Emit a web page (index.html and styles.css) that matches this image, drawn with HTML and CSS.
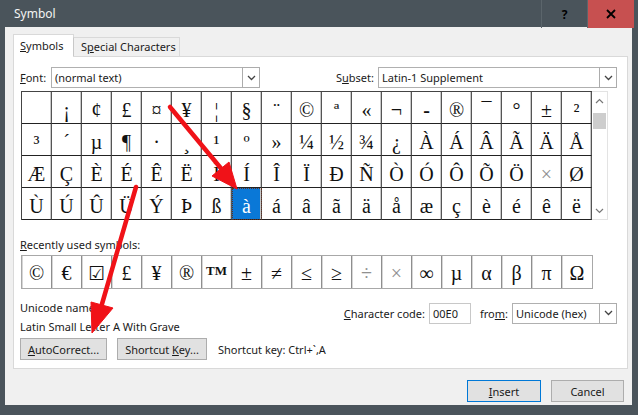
FILE: index.html
```html
<!DOCTYPE html>
<html>
<head>
<meta charset="utf-8">
<link rel="stylesheet" href="styles.css">
</head>
<body>
<div class="window">
  <div class="titlebar">
    <span class="title">Symbol</span>
    <div class="tb-btns">
      <div class="tb-help">?</div>
      <div class="tb-close"><svg width="10" height="10" viewBox="0 0 10 10"><path d="M1 1 L9 9 M9 1 L1 9" stroke="#000" stroke-width="1.8"/></svg></div>
    </div>
  </div>
  <div class="body">
    <div class="tabs">
      <div class="tab active"><span><u>S</u>ymbols</span></div>
      <div class="tab"><span>S<u>p</u>ecial Characters</span></div>
    </div>
    <div class="panel">
      <div class="row-font">
        <div class="field">
          <span class="lbl font-lbl"><u>F</u>ont:</span>
          <div class="combo font-combo"><span class="combo-text">(normal text)</span><span class="drop"><svg width="9" height="6" viewBox="0 0 9 6"><path d="M1 1 L4.5 4.5 L8 1" fill="none" stroke="#444" stroke-width="1.3"/></svg></span></div>
        </div>
        <div class="field subset-field">
          <span class="lbl">S<u>u</u>bset:</span>
          <div class="combo subset-combo"><span class="combo-text">Latin-1 Supplement</span><span class="drop"><svg width="9" height="6" viewBox="0 0 9 6"><path d="M1 1 L4.5 4.5 L8 1" fill="none" stroke="#444" stroke-width="1.3"/></svg></span></div>
        </div>
      </div>
      <div class="grid-wrap">
        <div class="symgrid">
          <div class="c"></div><div class="c">¡</div><div class="c">¢</div><div class="c">£</div><div class="c">¤</div><div class="c">¥</div><div class="c">¦</div><div class="c">§</div><div class="c">¨</div><div class="c">©</div><div class="c">ª</div><div class="c">«</div><div class="c">¬</div><div class="c hy">-</div><div class="c">®</div><div class="c">¯</div><div class="c">°</div><div class="c">±</div><div class="c">²</div>
          <div class="c">³</div><div class="c">´</div><div class="c">µ</div><div class="c">¶</div><div class="c">·</div><div class="c">¸</div><div class="c">¹</div><div class="c">º</div><div class="c">»</div><div class="c">¼</div><div class="c">½</div><div class="c">¾</div><div class="c">¿</div><div class="c">À</div><div class="c">Á</div><div class="c">Â</div><div class="c">Ã</div><div class="c">Ä</div><div class="c">Å</div>
          <div class="c">Æ</div><div class="c">Ç</div><div class="c">È</div><div class="c">É</div><div class="c">Ê</div><div class="c">Ë</div><div class="c">Ì</div><div class="c">Í</div><div class="c">Î</div><div class="c">Ï</div><div class="c">Ð</div><div class="c">Ñ</div><div class="c">Ò</div><div class="c">Ó</div><div class="c">Ô</div><div class="c">Õ</div><div class="c">Ö</div><div class="c gray">×</div><div class="c">Ø</div>
          <div class="c">Ù</div><div class="c">Ú</div><div class="c">Û</div><div class="c">Ü</div><div class="c">Ý</div><div class="c">Þ</div><div class="c">ß</div><div class="c sel">à</div><div class="c">á</div><div class="c">â</div><div class="c">ã</div><div class="c">ä</div><div class="c">å</div><div class="c">æ</div><div class="c">ç</div><div class="c">è</div><div class="c">é</div><div class="c">ê</div><div class="c">ë</div>
        </div>
        <div class="vscroll">
          <div class="sb-arrow"><svg width="9" height="6" viewBox="0 0 9 6"><path d="M1 5 L4.5 1.5 L8 5" fill="none" stroke="#777" stroke-width="1.2"/></svg></div>
          <div class="sb-thumb"></div>
          <div class="sb-track"></div>
          <div class="sb-arrow"><svg width="9" height="6" viewBox="0 0 9 6"><path d="M1 1 L4.5 4.5 L8 1" fill="none" stroke="#777" stroke-width="1.2"/></svg></div>
        </div>
      </div>
      <div class="recent-label"><u>R</u>ecently used symbols:</div>
      <div class="recent">
        <div class="r">©</div><div class="r">€</div><div class="r box">☑</div><div class="r">£</div><div class="r">¥</div><div class="r">®</div><div class="r tm">TM</div><div class="r">±</div><div class="r">≠</div><div class="r">≤</div><div class="r">≥</div><div class="r gray">÷</div><div class="r gray">×</div><div class="r">∞</div><div class="r">µ</div><div class="r">α</div><div class="r">β</div><div class="r">π</div><div class="r">Ω</div>
      </div>
      <div class="info">
        <div class="info-left">
          <div class="line">Unicode name:</div>
          <div class="line">Latin Small Letter A With Grave</div>
        </div>
        <div class="info-right">
          <span class="lbl"><u>C</u>haracter code:</span>
          <div class="textbox">00E0</div>
          <span class="lbl from-lbl">fro<u>m</u>:</span>
          <div class="combo from-combo"><span class="combo-text">Unicode (hex)</span><span class="drop"><svg width="9" height="6" viewBox="0 0 9 6"><path d="M1 1 L4.5 4.5 L8 1" fill="none" stroke="#444" stroke-width="1.3"/></svg></span></div>
        </div>
      </div>
      <div class="btn-row">
        <div class="btn auto"><span><u>A</u>utoCorrect...</span></div>
        <div class="btn key"><span>Shortcut <u>K</u>ey...</span></div>
        <span class="shortcut">Shortcut key: Ctrl+`,A</span>
      </div>
    </div>
    <div class="footer">
      <div class="btn insert"><span><u>I</u>nsert</span></div>
      <div class="btn cancel"><span>Cancel</span></div>
    </div>
  </div>
  <svg class="arrows" width="638" height="415" viewBox="0 0 638 415">
    <g fill="#f01218" stroke="#f01218">
      <line x1="170" y1="107" x2="224" y2="172" stroke-width="4.5" stroke-linecap="round"/>
      <polygon points="229,162 212,176 237,189" stroke-width="1"/>
      <line x1="136" y1="187" x2="102" y2="304" stroke-width="4.5" stroke-linecap="round"/>
      <polygon points="113,308 91,302 92,333" stroke-width="1"/>
    </g>
  </svg>
</div>
</body>
</html>
```

FILE: styles.css
```css
* { box-sizing: border-box; }
html, body { margin: 0; padding: 0; }
body {
  font-family: "Noto Sans", "Open Sans", sans-serif;
  font-size: 11px;
  color: #1a1a1a;
  background: #4a545b;
}
.window {
  position: relative;
  width: 638px;
  height: 415px;
  background: #4a545b;
  overflow: hidden;
}
.titlebar {
  height: 27px;
  display: flex;
  align-items: stretch;
  justify-content: space-between;
}
.title {
  color: #f4f4f4;
  padding-left: 14px;
  line-height: 27px;
  font-size: 12px;
}
.tb-btns {
  display: flex;
  margin-right: 4px;
}
.tb-help {
  width: 47px;
  height: 28px;
  display: flex;
  align-items: center;
  justify-content: center;
  font-weight: bold;
  font-size: 12px;
  color: #000;
  border-left: 1px solid #5b656b;
  border-right: 1px solid #5b656b;
}
.tb-close {
  width: 46px;
  height: 28px;
  background: #c75050;
  display: flex;
  align-items: center;
  justify-content: center;
}
.body {
  margin-left: 5px;
  width: 627px;
  height: 378px;
  background: #f0f0f0;
  padding: 7px 0 0 8px;
}
.tabs {
  display: flex;
  align-items: flex-end;
  height: 22px;
  position: relative;
  z-index: 2;
}
.tab {
  height: 19px;
  border: 1px solid #d9d9d9;
  border-bottom: none;
  background: #f0f0f0;
  line-height: 18px;
  white-space: nowrap;
  padding-left: 6px;
}
.tab.active {
  height: 23px;
  width: 61px;
  background: #ffffff;
  line-height: 22px;
  margin-bottom: -1px;
}
.tab:not(.active) {
  width: 107px;
  margin-left: -1px;
  padding-left: 7px;
  border-left-color: #c8c8c8;
}
.panel {
  width: 615px;
  height: 313px;
  background: #ffffff;
  border: 1px solid #d9d9d9;
  padding: 10px 10px 0 6px;
  position: relative;
  z-index: 1;
}
.row-font {
  display: flex;
  justify-content: space-between;
  height: 21px;
}
.field {
  display: flex;
  align-items: center;
}
.lbl { white-space: nowrap; }
.font-lbl { width: 31px; }
.subset-field .lbl { margin-right: 4px; }
.combo {
  height: 21px;
  border: 1px solid #b0b0b0;
  background: #fff;
  display: flex;
  align-items: center;
  justify-content: space-between;
  position: relative;
  white-space: nowrap;
}
.combo-text { padding-left: 3px; }
.drop {
  width: 18px;
  height: 21px;
  margin-right: -1px;
  border: 1px solid #acacac;
  display: flex;
  align-items: center;
  justify-content: center;
  background: #fff;
}
.font-combo { width: 209px; }
.subset-combo { width: 239px; }
.grid-wrap {
  display: flex;
  margin-top: 3px;
  margin-left: 1px;
}
.symgrid {
  display: grid;
  grid-template-columns: repeat(19, 30px);
  grid-template-rows: repeat(4, 32px);
  border-top: 1px solid #444;
  border-left: 1px solid #444;
  width: 571px;
}
.c {
  border-right: 1px solid #555;
  border-bottom: 1px solid #222;
  box-shadow: inset -1px 0 0 #c8c8c8;
  font-family: "Liberation Serif", "DejaVu Serif", serif;
  font-size: 20px;
  color: #111;
  display: flex;
  align-items: center;
  justify-content: center;
  padding-top: 5px;
}
.c.hy { font-weight: bold; }
.c.gray, .r.gray { color: #909090; }
.c.sel {
  background: #0a78d7;
  color: #fff;
  outline: 1px dotted #603020;
  outline-offset: -1px;
}
.vscroll {
  width: 16px;
  height: 129px;
  border: 1px solid #e3e3e3;
  border-left: none;
  background: #fff;
  display: flex;
  flex-direction: column;
}
.sb-arrow {
  height: 17px;
  display: flex;
  align-items: center;
  justify-content: center;
}
.sb-thumb {
  height: 16px;
  margin: 4px 1px 0 1px;
  background: #cdcdcd;
}
.sb-track { flex: 1; }
.recent-label {
  margin-top: 17px;
  line-height: 15px;
  height: 15px;
}
.recent {
  margin-top: 3px;
  margin-left: 1px;
  display: flex;
  width: 572px;
  height: 34px;
  border: 1px solid #a8a8a8;
}
.r {
  width: 30px;
  border-right: 1px solid #8e8e8e;
  box-shadow: inset 1px 0 0 #d6d6d6;
  font-family: "Liberation Serif", "DejaVu Serif", serif;
  font-size: 20px;
  color: #111;
  display: flex;
  align-items: center;
  justify-content: center;
  padding-top: 2px;
}
.r:last-child { border-right: none; }
.r.box { font-family: "DejaVu Sans", sans-serif; font-size: 19px; font-weight: bold; }
.r.tm { font-size: 13px; font-weight: bold; align-items: flex-start; padding-top: 7px; }
.info {
  display: flex;
  justify-content: space-between;
  margin-top: 11px;
  height: 38px;
}
.info-left .line { line-height: 15px; height: 19px; }
.info-right {
  display: flex;
  align-items: center;
  height: 22px;
  margin-top: 2px;
}
.textbox {
  width: 42px;
  height: 21px;
  border: 1px solid #c8c8c8;
  margin-left: 4px;
  padding-left: 3px;
  line-height: 19px;
}
.from-lbl { margin-left: 9px; margin-right: 4px; }
.from-combo { width: 105px; }
.btn-row {
  display: flex;
  align-items: center;
  height: 22px;
}
.btn {
  height: 22px;
  border: 1px solid #adadad;
  background: #e1e1e1;
  display: flex;
  align-items: center;
  justify-content: center;
  white-space: nowrap;
}
.btn.auto { width: 87px; }
.btn.key { width: 90px; margin-left: 10px; }
.shortcut { margin-left: 11px; }
.footer {
  display: flex;
  justify-content: flex-end;
  padding-right: 8px;
  margin-top: 11px;
}
.btn.insert { width: 74px; border-color: #0078d7; }
.btn.cancel { width: 73px; margin-left: 10px; }
.arrows {
  position: absolute;
  left: 0;
  top: 0;
  pointer-events: none;
  z-index: 5;
}
```
